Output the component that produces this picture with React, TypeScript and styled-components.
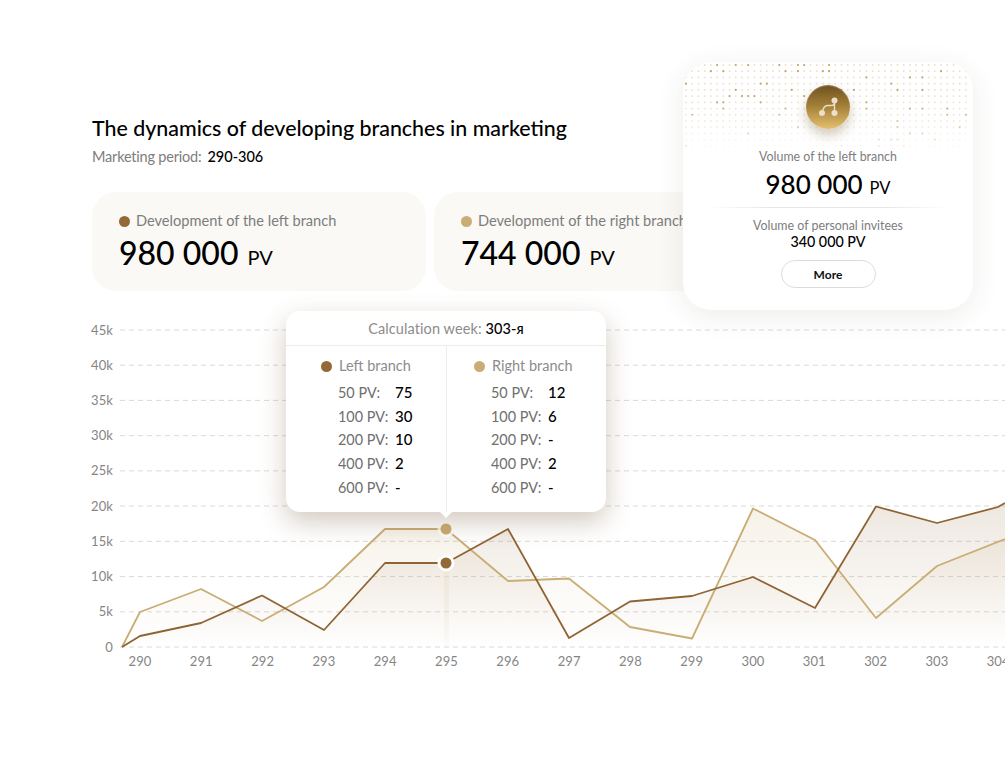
import React from 'react'
import styled, {createGlobalStyle} from 'styled-components'

const DARK = '#936a37'
const LIGHT = '#c9ad74'

const GlobalStyle = createGlobalStyle`
  html, body {
    margin: 0;
    background: #fff;
  }
  body {
    font-family: Lato, "Open Sans", sans-serif;
    color: #000;
  }
`

const Root = styled.div`
  position: relative;
  width: 1005px;
  height: 768px;
  overflow: hidden;
  padding-top: 115px;
  box-sizing: border-box;
  background: #fff;
`

const Header = styled.header`
  padding-left: 92px;
`

const Title = styled.h1`
  margin: 0;
  font-size: 21.4px;
  line-height: 27px;
  font-weight: 500;
`

const Period = styled.div`
  margin-top: 5px;
  font-size: 14.5px;
  line-height: 20px;
  color: #7d7d7d;
  letter-spacing: -0.2px;

  b {
    margin-left: 6px;
    font-weight: 500;
    color: #000;
    letter-spacing: 0;
  }
`

const Cards = styled.div`
  display: flex;
  gap: 8px;
  margin-top: 25px;
  padding-left: 92px;
`

const Card = styled.div`
  flex: 0 0 334px;
  height: 99px;
  padding: 20px 27px 0;
  box-sizing: border-box;
  border-radius: 24px;
  background: #faf9f6;
`

const CardLabel = styled.div`
  display: flex;
  align-items: center;
  gap: 6px;
  font-size: 14.6px;
  line-height: 18px;
  color: #7d7d7d;
  white-space: nowrap;
`

const Dot = styled.span<{$color: string}>`
  flex: none;
  width: 11px;
  height: 11px;
  border-radius: 50%;
  background: ${(p) => p.$color};
`

const CardValue = styled.div`
  margin-top: 2px;
  font-size: 32px;
  line-height: 42px;
  font-weight: 500;

  small {
    margin-left: 9px;
    font-size: 20px;
    font-weight: 400;
  }
`

const ChartWrap = styled.div`
  margin-top: 19px;
`

const ChartSvg = styled.svg`
  display: block;

  text {
    font-family: Lato, "Open Sans", sans-serif;
    font-size: 13px;
    fill: #858585;
    letter-spacing: 0.1px;
  }
`

const Tooltip = styled.div`
  position: absolute;
  left: 286px;
  top: 311px;
  width: 320px;
  height: 201px;
  border-radius: 14px;
  background: #fff;
  box-shadow: 0 10px 26px rgba(110, 80, 45, 0.3);

  &::after {
    content: '';
    position: absolute;
    left: 154px;
    bottom: -6px;
    border-left: 6px solid transparent;
    border-right: 6px solid transparent;
    border-top: 6px solid #fff;
  }
`

const TooltipHead = styled.div`
  height: 35px;
  box-sizing: border-box;
  border-bottom: 1px solid #ececea;
  font-size: 14.5px;
  line-height: 35px;
  text-align: center;
  color: #8c8c8c;
  letter-spacing: 0.1px;

  b {
    font-weight: 500;
    color: #000;
  }
`

const TooltipBody = styled.div`
  display: grid;
  grid-template-columns: 160px 160px;
  height: 166px;
`

const Branch = styled.div<{$inset: number}>`
  padding: 11px 0 0 ${(p) => p.$inset}px;
  box-sizing: border-box;

  & + & {
    border-left: 1px solid #ececea;
  }
`

const BranchTitle = styled.div`
  display: flex;
  align-items: center;
  gap: 7px;
  margin: 0 0 6px -17px;
  font-size: 14.5px;
  line-height: 18px;
  color: #8c8c8c;
`

const Row = styled.div`
  display: grid;
  grid-template-columns: 57px auto;
  font-size: 14.4px;
  line-height: 23.7px;
  color: #6f6f6f;

  b {
    font-weight: 500;
    font-size: 15px;
    color: #000;
  }
`

const InfoCard = styled.aside`
  position: absolute;
  left: 683px;
  top: 62px;
  width: 290px;
  height: 248px;
  border-radius: 28px;
  background: #fff;
  box-shadow: 0 6px 28px rgba(60, 50, 30, 0.09);
  overflow: hidden;
  display: flex;
  flex-direction: column;
  align-items: center;
`

const DotField = styled.svg`
  position: absolute;
  left: 0;
  top: 0;
  mask-image: linear-gradient(#000 40%, transparent 100%);
`

const Medal = styled.div`
  position: relative;
  margin: 23px 0 19px;
  width: 44px;
  height: 44px;
  border-radius: 50%;
  background: linear-gradient(#6f5120 0%, #a07d36 45%, #e6bf6e 100%);
  box-shadow: 0 6px 12px rgba(110, 85, 40, 0.32), inset 0 1px 1px rgba(255, 255, 255, 0.25);
`

const InfoLabel = styled.div`
  position: relative;
  font-size: 12.4px;
  line-height: 17px;
  color: #7d7d7d;
`

const InfoValue = styled.div`
  margin-top: 2px;
  font-size: 26px;
  line-height: 34px;
  font-weight: 500;

  small {
    margin-left: 7px;
    font-size: 16.5px;
    font-weight: 400;
  }
`

const Divider = styled.div`
  width: 236px;
  height: 1px;
  margin: 2px 0 9px;
  background: linear-gradient(90deg, transparent, #e6e6e4 25%, #e6e6e4 75%, transparent);
`

const InfoSub = styled.div`
  font-size: 14.3px;
  line-height: 15px;
  font-weight: 500;
`

const MoreButton = styled.button`
  margin-top: 11px;
  width: 95px;
  height: 28px;
  padding: 0;
  border: 1px solid #dcdcdc;
  border-radius: 14px;
  background: #fff;
  font-family: inherit;
  font-size: 12px;
  font-weight: 700;
  color: #111;
`

const gridRows = [
  ['45k', 330],
  ['40k', 365.2],
  ['35k', 400.4],
  ['30k', 435.7],
  ['25k', 470.9],
  ['20k', 506],
  ['15k', 541.3],
  ['10k', 576.6],
  ['5k', 611.8],
  ['0', 647],
] as const

const weeks = [290, 291, 292, 293, 294, 295, 296, 297, 298, 299, 300, 301, 302, 303, 304]

const darkLine = [
  [122, 647], [140, 636], [201, 623], [262, 595.5], [324, 630], [385, 563], [446, 563], [508, 529],
  [569, 638], [630, 601.5], [692, 596], [753, 577], [815, 608], [876, 506.5], [937, 523], [998, 507], [1005, 503],
]

const lightLine = [
  [122, 647], [140, 612], [201, 589], [262, 621], [324, 587], [385, 529], [446, 529], [508, 581],
  [569, 578.5], [630, 627], [692, 638.5], [753, 508.5], [815, 540], [876, 618], [937, 566], [1005, 539],
]

const toPoints = (line: number[][]) => line.map((p) => p.join(',')).join(' ')
const toArea = (line: number[][]) => `${toPoints(line)} ${line[line.length - 1][0]},647 122,647`

const Chart = () => (
  <ChartSvg width={1005} height={370} viewBox="0 310 1005 370">
    <defs>
      <linearGradient id="darkFill" gradientUnits="userSpaceOnUse" x1="0" y1="506" x2="0" y2="647">
        <stop offset="0" stopColor="#8f6434" stopOpacity="0.15" />
        <stop offset="1" stopColor="#8f6434" stopOpacity="0" />
      </linearGradient>
      <linearGradient id="lightFill" gradientUnits="userSpaceOnUse" x1="0" y1="506" x2="0" y2="647">
        <stop offset="0" stopColor="#c9ac72" stopOpacity="0.16" />
        <stop offset="1" stopColor="#c9ac72" stopOpacity="0" />
      </linearGradient>
      <linearGradient id="band" x1="0" y1="0" x2="0" y2="1">
        <stop offset="0" stopColor="#e9e2d4" stopOpacity="0.6" />
        <stop offset="1" stopColor="#e9e2d4" stopOpacity="0.1" />
      </linearGradient>
    </defs>
    {gridRows.map(([label, y]) => (
      <g key={label}>
        <line x1={120} x2={1005} y1={y} y2={y} stroke="#d9d9d9" strokeWidth={1} strokeDasharray="5 4" />
        <text x={113} y={y + 4.5} textAnchor="end">
          {label}
        </text>
      </g>
    ))}
    {weeks.map((w, i) => (
      <text key={w} x={140 + i * 61.3} y={666} textAnchor="middle">
        {w}
      </text>
    ))}
    <polygon points={toArea(lightLine)} fill="url(#lightFill)" />
    <polygon points={toArea(darkLine)} fill="url(#darkFill)" />
    <rect x={444} y={565} width={5} height={82} fill="url(#band)" />
    <polyline points={toPoints(lightLine)} fill="none" stroke={LIGHT} strokeWidth={1.8} strokeLinejoin="round" />
    <polyline points={toPoints(darkLine)} fill="none" stroke="#8f6434" strokeWidth={1.8} strokeLinejoin="round" />
    <circle cx={446} cy={529} r={8.5} fill="#fff" fillOpacity={0.8} />
    <circle cx={446} cy={529} r={5.5} fill={LIGHT} />
    <circle cx={446} cy={563} r={8.5} fill="#fff" />
    <circle cx={446} cy={563} r={5.5} fill={DARK} />
  </ChartSvg>
)

// fixed seed so the speckle comes out the same on every load
function makeDots() {
  let seed = 123456789
  const rnd = () => {
    seed = (seed * 16807) % 2147483647
    return seed / 2147483647
  }
  const dots: {x: number; y: number; strong: boolean}[] = []
  for (let row = 0; row < 15; row++) {
    for (let col = 0; col < 46; col++) {
      dots.push({x: 3 + col * 6.22, y: 3 + row * 6.22, strong: rnd() < 0.1})
    }
  }
  return dots
}

const dots = makeDots()

const InfoDots = () => (
  <DotField width={290} height={96} viewBox="0 0 290 96">
    {dots.map((d, i) => (
      <circle
        key={i}
        cx={d.x}
        cy={d.y}
        r={d.strong ? 1.1 : 0.9}
        fill={d.strong ? '#c4a362' : '#eadfc9'}
      />
    ))}
  </DotField>
)

const BranchIcon = () => (
  <svg width="44" height="44" viewBox="0 0 44 44">
    <path
      d="M28.500 15.500 V28 M28.500 17.500 Q28.500 20.500 25.500 20.500 H21.500 Q17.500 20.500 16 28"
      fill="none"
      stroke="#eadfc8"
      strokeWidth="1.4"
    />
    <circle cx="28.500" cy="15.500" r="3" fill="#eadfc8" />
    <circle cx="28.500" cy="28" r="3" fill="#eadfc8" />
    <circle cx="16" cy="28" r="3" fill="#eadfc8" />
  </svg>
)

type BranchProps = {title: string; color: string; inset: number; rows: [string, string][]}

const BranchColumn = ({title, color, inset, rows}: BranchProps) => (
  <Branch $inset={inset}>
    <BranchTitle>
      <Dot $color={color} />
      {title}
    </BranchTitle>
    {rows.map(([label, value]) => (
      <Row key={label}>
        <span>{label}</span>
        <b>{value}</b>
      </Row>
    ))}
  </Branch>
)

export default function App() {
  return (
    <Root>
      <GlobalStyle />
      <Header>
        <Title>The dynamics of developing branches in marketing</Title>
        <Period>
          Marketing period:<b>290-306</b>
        </Period>
      </Header>

      <Cards>
        <Card>
          <CardLabel>
            <Dot $color={DARK} />
            Development of the left branch
          </CardLabel>
          <CardValue>
            980 000<small>PV</small>
          </CardValue>
        </Card>
        <Card>
          <CardLabel>
            <Dot $color={LIGHT} />
            Development of the right branch
          </CardLabel>
          <CardValue>
            744 000<small>PV</small>
          </CardValue>
        </Card>
      </Cards>

      <ChartWrap>
        <Chart />
      </ChartWrap>

      <Tooltip>
        <TooltipHead>
          Calculation week: <b>303-я</b>
        </TooltipHead>
        <TooltipBody>
          <BranchColumn
            title="Left branch"
            color={DARK}
            inset={52}
            rows={[
              ['50 PV:', '75'],
              ['100 PV:', '30'],
              ['200 PV:', '10'],
              ['400 PV:', '2'],
              ['600 PV:', '-'],
            ]}
          />
          <BranchColumn
            title="Right branch"
            color={LIGHT}
            inset={44}
            rows={[
              ['50 PV:', '12'],
              ['100 PV:', '6'],
              ['200 PV:', '-'],
              ['400 PV:', '2'],
              ['600 PV:', '-'],
            ]}
          />
        </TooltipBody>
      </Tooltip>

      <InfoCard>
        <InfoDots />
        <Medal>
          <BranchIcon />
        </Medal>
        <InfoLabel>Volume of the left branch</InfoLabel>
        <InfoValue>
          980 000<small>PV</small>
        </InfoValue>
        <Divider />
        <InfoLabel>Volume of personal invitees</InfoLabel>
        <InfoSub>340 000 PV</InfoSub>
        <MoreButton>More</MoreButton>
      </InfoCard>
    </Root>
  )
}
